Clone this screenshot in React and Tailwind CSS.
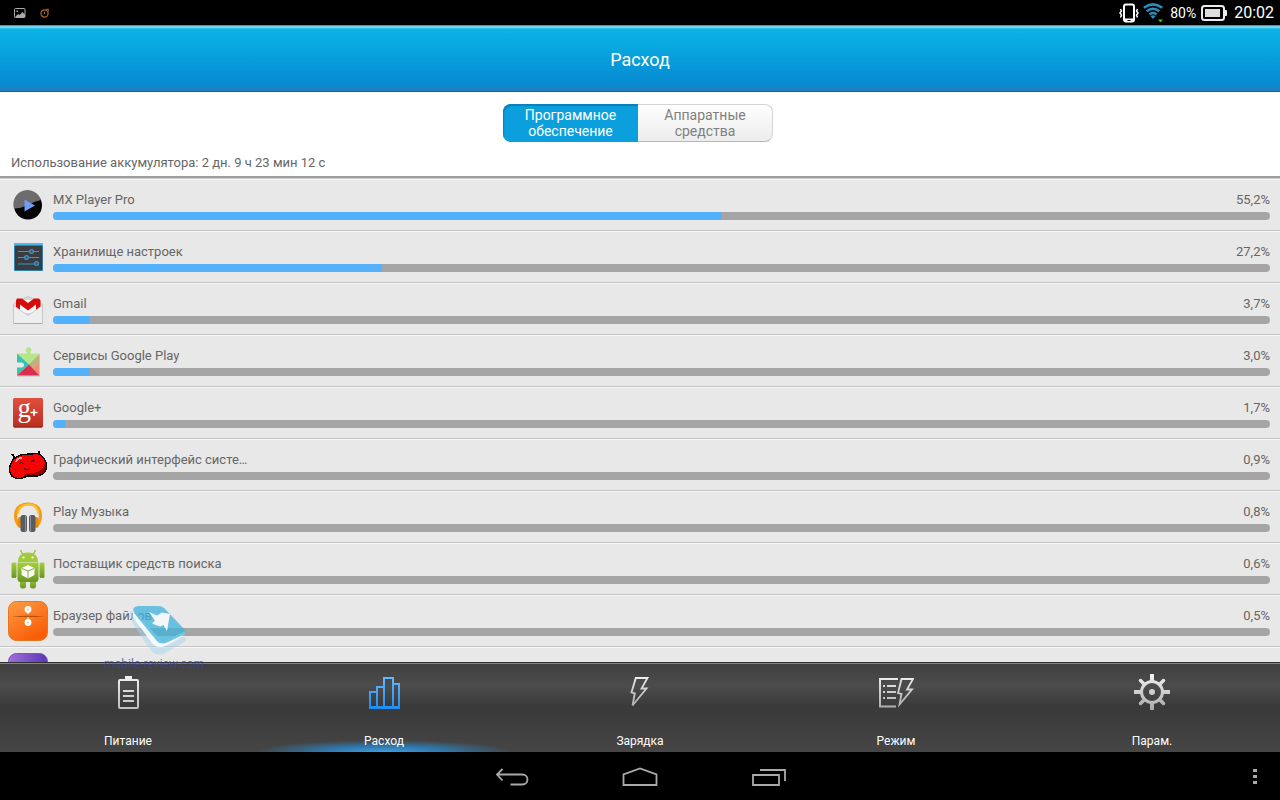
import React from "react";

/* ---------- app icons ---------- */

function PlayerIcon() {
  return (
    <svg viewBox="0 0 40 40" className="size-10" aria-hidden="true">
      <circle cx="20" cy="20.500" r="14" fill="#050505" />
      <path d="M6 23.500A14 14 0 0 1 33 15Q26 16.500 20 20Q13 23.500 6 23.500Z" fill="#6c6c6c" />
      <path d="M16.500 14.500L27 20.500L16.500 26.500Z" fill="#6e9dfa" />
    </svg>
  );
}

function SettingsIcon() {
  return (
    <svg viewBox="0 0 40 40" className="size-10" aria-hidden="true">
      <rect x="6" y="6" width="29" height="28" rx="1" fill="#2f7fad" />
      <rect x="6" y="6" width="29" height="3" fill="#4db7ee" />
      <rect x="7" y="8.500" width="27" height="24.500" fill="#393c40" />
      <g stroke="#3d96c6" strokeWidth="1.200" fill="#2c5f7c">
        <path d="M10 14.500H31M10 20.500H31M10 27H31" />
        <circle cx="23.500" cy="14.500" r="1.900" />
        <circle cx="18.500" cy="20.500" r="1.900" />
        <circle cx="28.500" cy="26.500" r="1.900" />
      </g>
    </svg>
  );
}

function GmailIcon() {
  return (
    <svg viewBox="0 0 40 40" className="size-10" aria-hidden="true">
      <path d="M5.500 15L9 12.500L20 7.500L31 12.500L34.500 15V34.500H5.500Z" fill="#d9d9d9" stroke="#bcbcbc" strokeWidth="0.800" />
      <path d="M9 11H31V24H9Z" fill="#f6f6f6" />
      <path d="M9 9.500H14L20 14L26 9.500H31L32.500 11.500V18L28 21.500V15.500L20 21.500L12 15.500V21.500L8 18V11.500Z" fill="#d60b0b" />
      <path d="M5.500 16.500L20 26.500L34.500 16.500V34.500H5.500Z" fill="#eeeeee" stroke="#c4c4c4" strokeWidth="0.800" />
      <path d="M6 34.500H34" stroke="#ababab" />
    </svg>
  );
}

function ServicesIcon() {
  return (
    <svg viewBox="0 0 40 40" className="size-10" aria-hidden="true">
      <path d="M9 12.500H18.500V11A2.800 2.800 0 1 1 22.500 11V12.500H31.500L21 24Z" fill="#b5e68b" />
      <path d="M9 12.500L21 23.500L9 34.500V26.500H13.500Q16 26.500 16 24T13.500 21.500H9Z" fill="#35c4b4" />
      <path d="M31.500 13V34.500L21 23.500Z" fill="#f58b6d" />
      <path d="M31.500 12.500L21 23.500L25.500 28L31.500 22Z" fill="#8bdc96" opacity="0.450" />
      <path d="M9 34.500L21 23.500L31.500 34.500Z" fill="#d92f4d" />
      <path d="M9 34.800H31.500" stroke="#999999" strokeWidth="0.800" />
    </svg>
  );
}

function GooglePlusIcon() {
  return (
    <svg viewBox="0 0 40 40" className="size-10" aria-hidden="true">
      <defs>
        <linearGradient id="gplus" x1="0" y1="0" x2="0" y2="1">
          <stop offset="0" stopColor="#e0503f" />
          <stop offset="1" stopColor="#b92d1f" />
        </linearGradient>
      </defs>
      <rect x="5" y="5" width="30" height="29.500" rx="1.500" fill="url(#gplus)" />
      <path d="M6 34H34" stroke="#8d2318" />
      <text x="9.500" y="23.500" fontFamily="Liberation Serif, serif" fontSize="27" fill="#ffffff">g</text>
      <path d="M22.500 19.500H29.500M26 16V23" stroke="#ffffff" strokeWidth="1.600" />
    </svg>
  );
}

function BeanIcon() {
  return (
    <svg viewBox="0 0 40 40" className="size-10" shapeRendering="crispEdges" aria-hidden="true">
      <path d="M7 13L4 9M30 11L31 6" stroke="#000000" strokeWidth="2" />
      <path d="M4 16Q8 11 15 9.500L29 8.500Q35 10 37.500 16Q40 24 36 28Q31 32 24 31Q20 30.500 17 32Q12 34.500 6 32.500Q1.500 30 1.500 24Q2 19 4 16Z" fill="#f40505" stroke="#000000" strokeWidth="1.400" />
      <path d="M37.500 17Q39 24 35.500 27.500Q31 31 24 30Q20 29.500 17 31L14 32Q18 28 23 27.500Q33 29 36.500 19Z" fill="#930000" />
      <path d="M8 17Q10 13 14 12.500" stroke="#ff9a9a" strokeWidth="2" fill="none" />
      <path d="M11 19L13 17.500L16 19M23 17L25 15.500L27 17M16 23Q19 27 22 23" stroke="#300000" fill="none" />
    </svg>
  );
}

function MusicIcon() {
  return (
    <svg viewBox="0 0 40 40" className="size-10" aria-hidden="true">
      <path d="M11.500 29Q7.500 25 7.500 18Q8.500 7 20 7T32.500 18Q32.500 25 28.500 29" fill="none" stroke="#f59a12" strokeWidth="3.200" />
      <path d="M10 17Q11 8 20 7.500T30.500 17" fill="none" stroke="#fdc02f" strokeWidth="2.200" />
      <rect x="10" y="20" width="4" height="11" rx="2" fill="#e88a10" />
      <rect x="26.500" y="20" width="4" height="11" rx="2" fill="#e88a10" />
      <rect x="12.500" y="18" width="6.500" height="17" rx="2.500" fill="#575c63" />
      <rect x="21" y="18" width="6.500" height="17" rx="2.500" fill="#575c63" />
      <path d="M17.500 19V34M22.500 19V34" stroke="#8b9097" />
    </svg>
  );
}

function AndroidIcon() {
  return (
    <svg viewBox="0 0 40 40" className="size-10" aria-hidden="true">
      <defs>
        <linearGradient id="droid" x1="0" y1="0" x2="0" y2="1">
          <stop offset="0" stopColor="#a4d03c" />
          <stop offset="1" stopColor="#6b9524" />
        </linearGradient>
      </defs>
      <path d="M14.500 5L12.500 1M25.500 5L27.500 1" stroke="#8fb935" strokeWidth="1.200" />
      <path d="M10 13Q10 3.500 20 3.500T30 13Z" fill="#a1cb3c" />
      <circle cx="15.500" cy="8.500" r="1.100" fill="#ffffff" />
      <circle cx="24.500" cy="8.500" r="1.100" fill="#ffffff" />
      <g fill="url(#droid)">
        <rect x="3.500" y="13.500" width="5" height="15.500" rx="1.500" />
        <rect x="31.500" y="13.500" width="5" height="15.500" rx="1.500" />
        <rect x="12" y="29" width="6" height="10.500" rx="2.500" />
        <rect x="22" y="29" width="6" height="10.500" rx="2.500" />
        <path d="M9.500 13.500H30.500V30Q30.500 33 27.500 33H12.500Q9.500 33 9.500 30Z" />
      </g>
      <path d="M20 16L26.500 19V26L20 29.500L13.500 26V19Z" fill="#fafcf4" />
      <path d="M14 19.500L20 22L26 19.500M20 22V29" stroke="#86a94c" fill="none" />
    </svg>
  );
}

function FilesIcon() {
  return (
    <svg viewBox="0 0 40 40" className="size-10" aria-hidden="true">
      <defs>
        <linearGradient id="files" x1="0" y1="0" x2="0.600" y2="1">
          <stop offset="0" stopColor="#ff9c45" />
          <stop offset="1" stopColor="#f95d05" />
        </linearGradient>
      </defs>
      <rect x="0.500" y="0.500" width="39" height="39" rx="8" fill="url(#files)" stroke="#e8741d" />
      <path d="M3 15.200Q20 14.500 37 15.200Q20 16.500 3 15.200Z" fill="#9c4108" />
      <path d="M20 8V13M20 16V21" stroke="#ffd0a8" strokeWidth="1.500" />
      <circle cx="20" cy="8.500" r="3.400" fill="#ffffff" />
      <circle cx="20" cy="21.500" r="3.400" fill="#ffffff" />
      <circle cx="20" cy="8.500" r="1" fill="#e9c3a6" />
      <circle cx="20" cy="21.500" r="1" fill="#e9c3a6" />
    </svg>
  );
}

function PurpleIcon() {
  return (
    <svg viewBox="0 0 40 40" className="size-10" aria-hidden="true">
      <defs>
        <linearGradient id="purple" x1="0" y1="0" x2="1" y2="0">
          <stop offset="0" stopColor="#a070da" />
          <stop offset="1" stopColor="#5a35b4" />
        </linearGradient>
      </defs>
      <rect x="0.500" y="0.500" width="39" height="39" rx="8" fill="url(#purple)" stroke="#7a52c4" />
    </svg>
  );
}

/* ---------- tab icons ---------- */

function TabSvg({ id, from, to, children }) {
  return (
    <svg viewBox="0 0 36 36" className="size-9" fill="none" stroke={`url(#${id})`} strokeWidth="2" aria-hidden="true">
      <defs>
        <linearGradient id={id} gradientUnits="userSpaceOnUse" x1="0" y1="0" x2="0" y2="36">
          <stop offset="0" stopColor={from} />
          <stop offset="1" stopColor={to} />
        </linearGradient>
      </defs>
      {children}
    </svg>
  );
}

function BatteryTabIcon() {
  return (
    <TabSvg id="tab-battery" from="#f4f4f4" to="#bdbdbd">
      <rect x="9" y="6" width="19" height="28" rx="1" />
      <path d="M15 4H22" strokeWidth="4" />
      <path d="M13 17H24M13 22H24M13 27H24" />
    </TabSvg>
  );
}

function ChartTabIcon() {
  return (
    <TabSvg id="tab-chart" from="#6cbcff" to="#1a8cf4">
      <path d="M4 34V18H11M11 34V13H18M18 34V4H27V34M27 10H33V34" />
      <path d="M3 33.500H34" strokeWidth="3" />
    </TabSvg>
  );
}

function BoltTabIcon() {
  return (
    <TabSvg id="tab-bolt" from="#f4f4f4" to="#a8a8a8">
      <path d="M13.800 4H25.500L19.500 14.500H24.500L10.500 31.500L12.800 19.500L9.500 18.500Z" strokeWidth="1.800" />
    </TabSvg>
  );
}

function ModeTabIcon() {
  return (
    <TabSvg id="tab-mode" from="#f4f4f4" to="#a8a8a8">
      <path d="M20 5H2V32.500H18" />
      <path d="M5 12H7M5 18H7M5 24H7M9 12H18M9 18H18M9 24H18" />
      <path d="M23.500 5H35L29 15.500H34L21.500 30.500L23.500 20L20 19Z" strokeWidth="1.800" />
    </TabSvg>
  );
}

function GearTabIcon() {
  return (
    <TabSvg id="tab-gear" from="#f4f4f4" to="#a8a8a8">
      <circle cx="18" cy="18" r="10.500" strokeWidth="3" />
      <circle cx="18" cy="18" r="1.500" strokeWidth="3" />
      <path d="M17.990 0V7M18.010 29V36M0 17.990H7M29 18.010H36" strokeWidth="4" />
      <path d="M6.500 6.500L10 10M26 26L29.500 29.500M29.500 6.500L26 10M6.500 29.500L10 26" strokeWidth="3.500" strokeLinecap="round" />
    </TabSvg>
  );
}

/* ---------- data ---------- */

const apps = [
  { name: "MX Player Pro", share: 55.2, Icon: PlayerIcon },
  { name: "Хранилище настроек", share: 27.2, Icon: SettingsIcon },
  { name: "Gmail", share: 3.7, Icon: GmailIcon },
  { name: "Сервисы Google Play", share: 3.0, Icon: ServicesIcon },
  { name: "Google+", share: 1.7, Icon: GooglePlusIcon },
  { name: "Графический интерфейс систе…", share: 0.9, Icon: BeanIcon },
  { name: "Play Музыка", share: 0.8, Icon: MusicIcon },
  { name: "Поставщик средств поиска", share: 0.6, Icon: AndroidIcon },
  { name: "Браузер файлов", share: 0.5, Icon: FilesIcon },
  { name: "", share: null, Icon: PurpleIcon },
];

const tabs = [
  { label: "Питание", Icon: BatteryTabIcon },
  { label: "Расход", Icon: ChartTabIcon, active: true },
  { label: "Зарядка", Icon: BoltTabIcon },
  { label: "Режим", Icon: ModeTabIcon },
  { label: "Парам.", Icon: GearTabIcon },
];

/* ---------- sections ---------- */

function StatusBar() {
  return (
    <div className="flex h-[25px] shrink-0 items-center justify-between bg-black pl-3.5 pr-1.5 text-white">
      <div className="flex items-center gap-3.5">
        <svg viewBox="0 0 12 10" className="h-2.5 w-3" aria-hidden="true">
          <rect x="0.500" y="0.500" width="10.500" height="9" rx="1" fill="none" stroke="#a9a9a9" />
          <path d="M1 9L4 6L5.500 7L8.500 4L11 6.500V9Z" fill="#a9a9a9" />
          <rect x="2.500" y="2.500" width="1.500" height="1.500" fill="#a9a9a9" />
        </svg>
        <svg viewBox="0 0 10 10" className="size-2.5" fill="none" stroke="#a8692a" aria-hidden="true">
          <circle cx="4.500" cy="5.500" r="3.600" strokeWidth="1.200" />
          <path d="M4.500 3.500V6M6 1.500L8.500 1M8 1L8.500 3.500" />
        </svg>
      </div>
      <div className="flex items-center">
        <svg viewBox="0 0 20 20" className="size-5" fill="none" stroke="#ffffff" aria-hidden="true">
          <rect x="5" y="1.500" width="10" height="17" rx="2" strokeWidth="2" />
          <path d="M5 17H15" strokeWidth="3" />
          <path d="M8.500 17.500H11.500" stroke="#000000" strokeWidth="1" />
          <path d="M1.500 6L2.500 8L1 10L2.500 12L1.500 14.500M18.500 6L17.500 8L19 10L17.500 12L18.500 14.500" strokeWidth="1.500" />
        </svg>
        <svg viewBox="0 0 20 20" className="ml-1 size-5" fill="none" stroke="#2a8fc0" strokeWidth="2.500" aria-hidden="true">
          <path d="M0.800 4.800Q10 -2 19.200 4.800M3.700 8.200Q10 3.200 16.300 8.200M6.500 11.500Q10 8.500 13.500 11.500" />
          <path d="M7.500 13.200Q10 11.500 12.500 13.200L10 16Z" fill="#2a8fc0" stroke="none" />
          <path d="M15 16.500H20L17.500 19.500Z" fill="#35d000" stroke="none" />
        </svg>
        <span className="ml-[7px] text-[14px] leading-5">80%</span>
        <svg viewBox="0 0 26 16" className="ml-[5px] h-4 w-[26px]" aria-hidden="true">
          <rect x="1" y="1" width="22" height="14" rx="2.500" fill="none" stroke="#ececec" strokeWidth="2" />
          <rect x="4" y="4" width="15" height="8" fill="#dedede" />
          <path d="M24 5H25Q26 5 26 6V10Q26 11 25 11H24Z" fill="#ececec" />
        </svg>
        <time className="ml-[7px] text-base leading-5">20:02</time>
      </div>
    </div>
  );
}

function AppRow({ name, share, Icon }) {
  return (
    <li className="flex h-[52px] shrink-0 gap-[5px] border-t border-b border-t-[#f7f7f7] border-b-[#c4c4c4] bg-[#e8e8e8] pl-2 pr-2.5 last:border-b-0">
      <div className="shrink-0 pt-[5px]">
        <Icon />
      </div>
      {share !== null && (
        <div className="min-w-0 flex-1 pt-3">
          <div className="flex justify-between leading-4">
            <span className="truncate">{name}</span>
            <span>{share.toFixed(1).replace(".", ",")}%</span>
          </div>
          <div
            role="progressbar"
            aria-label={name}
            aria-valuenow={share}
            aria-valuemin={0}
            aria-valuemax={100}
            className="mt-1 h-2 overflow-hidden rounded-full bg-[#a5a5a5]"
          >
            <div className="h-full bg-[#54b2fc]" style={{ width: `${Math.floor(share)}%` }} />
          </div>
        </div>
      )}
    </li>
  );
}

function Watermark() {
  return (
    <div className="pointer-events-none absolute -bottom-2.5 left-[104px] z-10 flex flex-col items-center" aria-hidden="true">
      <svg viewBox="0 0 60 52" className="ml-2.5 h-[52px] w-[60px]">
        <path d="M1 10Q0 6 5 8L30 38Q34 42 40 41L54 33Q60 34 54 39L36 49Q27 54 20 44L4 20Z" fill="#9fd3ef" opacity="0.450" />
        <path d="M4 6Q3 12 6 16L23 39Q28 45 36 42L56 30V27L34 38Z" fill="#ffffff" opacity="0.850" />
        <path d="M9 2H29Q34 2 37 6L56 26Q58 29 54 31L37 39Q31 41 27 36L5 9Q2 3 9 2Z" fill="#3fb3dc" opacity="0.750" />
        <path d="M20 8L28 11.500L33 8.500L41 10L38 27L34.500 21L31 22.500L23 19.500L26 16.500Z" fill="#f3f7f9" />
      </svg>
      <span className="text-[12px] leading-4 text-[#3d4690] opacity-75">mobile-review.com</span>
    </div>
  );
}

function TabBar() {
  return (
    <nav className="grid h-[90px] shrink-0 grid-cols-5 border-t border-t-[#303030] bg-[linear-gradient(to_bottom,#404040_0%,#4c4c4c_26%,#3a3a3a_48%,#3c3c3c_65%,#464646_100%)] shadow-[inset_0_1px_0_#858585]">
      {tabs.map(({ label, Icon, active }) => (
        <button
          key={label}
          type="button"
          aria-current={active ? "page" : undefined}
          className={
            active
              ? "flex flex-col items-center justify-between bg-[radial-gradient(ellipse_50%_12px_at_50%_100%,#3f9ee0_0%,#2f79b0_45%,transparent_100%)] pt-[11px] pb-[3px]"
              : "flex flex-col items-center justify-between pt-[11px] pb-[3px]"
          }
        >
          <Icon />
          <span className="text-[12px] leading-4 text-white">{label}</span>
        </button>
      ))}
    </nav>
  );
}

function SystemBar() {
  return (
    <div className="grid h-12 shrink-0 grid-cols-[1fr_auto_1fr] items-center bg-black pt-0.5 text-[#a9a9a9]">
      <span />
      <div className="flex">
        <button type="button" aria-label="Назад" className="flex h-11 w-32 items-center justify-center">
          <svg viewBox="0 0 36 20" className="h-5 w-9" fill="none" stroke="currentColor" strokeWidth="1.800" aria-hidden="true">
            <path d="M8.500 2L3 7.500L8.500 13.500M3 7.500H28.500A4.800 4.800 0 0 1 28.500 17.500H16.500" />
          </svg>
        </button>
        <button type="button" aria-label="Домой" className="flex h-11 w-32 items-center justify-center">
          <svg viewBox="0 0 36 20" className="h-5 w-9" fill="none" stroke="currentColor" strokeWidth="1.800" aria-hidden="true">
            <path d="M1.500 18V7.500L18 1.500L34.500 7.500V18Z" />
          </svg>
        </button>
        <button type="button" aria-label="Недавние" className="flex h-11 w-32 items-center justify-center">
          <svg viewBox="0 0 36 20" className="h-5 w-9" fill="none" stroke="currentColor" strokeWidth="1.800" aria-hidden="true">
            <path d="M3 8H29V18H3ZM10 3H35V14" />
          </svg>
        </button>
      </div>
      <button type="button" aria-label="Меню" className="mr-[18px] justify-self-end p-1">
        <svg viewBox="0 0 6 18" className="h-[18px] w-1.5" fill="currentColor" aria-hidden="true">
          <path d="M1 1H5V4H1ZM1 7H5V10H1ZM1 13H5V16H1Z" />
        </svg>
      </button>
    </div>
  );
}

export default function App() {
  return (
    <div className="flex h-screen flex-col overflow-hidden bg-[#e8e8e8] font-[Roboto,sans-serif] text-[13px] text-[#666666]">
      <StatusBar />
      <header className="flex h-[67px] shrink-0 items-center justify-center border-b border-b-[#1a6299] bg-linear-to-b from-[#0cb8e9] to-[#0885ce] pt-1 shadow-[inset_0_1px_0_#21a4cf,inset_0_3px_0_#74d2ef,inset_0_4px_0_#35c3ec,inset_0_-4px_0_#2080bd]">
        <h1 className="text-lg leading-6 text-white">Расход</h1>
      </header>

      <main className="relative flex min-h-0 flex-1 flex-col">
        <section className="shrink-0 border-b-2 border-b-[#9e9e9e] bg-white pt-3 pb-[5px]">
          <div className="flex justify-center pr-1">
            <button
              type="button"
              aria-pressed="true"
              className="h-[38px] w-[135px] rounded-l-lg bg-[#0b9fdd] px-4 text-[14px] leading-4 text-white shadow-[inset_1px_2px_1px_#0880b8]"
            >
              Программное обеспечение
            </button>
            <button
              type="button"
              aria-pressed="false"
              className="h-[38px] w-[135px] rounded-r-lg border border-l-0 border-[#d4d4d4] border-b-[#b8b8b8] bg-linear-to-b from-white to-[#ececec] px-4 text-[14px] leading-4 text-[#808080]"
            >
              Аппаратные средства
            </button>
          </div>
          <p className="mt-[13px] pl-[11px] leading-4">Использование аккумулятора: 2 дн. 9 ч 23 мин 12 с</p>
        </section>
        <ul className="flex min-h-0 flex-1 flex-col overflow-hidden border-t border-t-[#cccccc]">
          {apps.map((app, index) => (
            <AppRow key={index} {...app} />
          ))}
        </ul>
        <Watermark />
      </main>

      <TabBar />
      <SystemBar />
    </div>
  );
}
